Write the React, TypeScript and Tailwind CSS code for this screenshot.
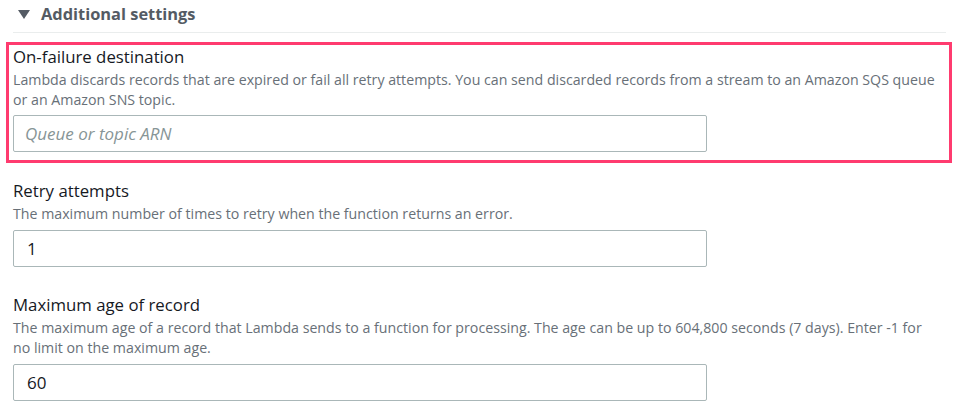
import React from 'react';

const font = { fontFamily: '"Open Sans", "Liberation Sans", sans-serif' };

function Field({
  label,
  description,
  value,
  placeholder,
  inputGap,
}: {
  label: string;
  description: string;
  value?: string;
  placeholder?: string;
  inputGap: string;
}) {
  return (
    <div className="flex flex-col">
      <div className="text-[16.8px] leading-[22px] text-[#16191f]">{label}</div>
      <p className="mt-[2px] max-w-[928px] text-[14.2px] leading-[20px] text-[#687078]">{description}</p>
      <div
        className={`${inputGap} w-[694px] h-[37px] border border-[#aab7b8] rounded-[2px] flex items-center px-[11px] text-[17px]`}
      >
        {value ? (
          <span className="text-[#16191f] ml-[2px]">{value}</span>
        ) : (
          <span className="italic text-[#879596]">{placeholder}</span>
        )}
      </div>
    </div>
  );
}

export default function App() {
  return (
    <div className="w-[960px] h-[412px] bg-white overflow-hidden" style={font}>
      {/* Header */}
      <div className="ml-[13px] mr-[14px] h-[33px] border-b border-[#eaeded] flex items-start pt-[3px]">
        <div className="flex items-center gap-[11px] ml-[5px]">
          <svg width="12" height="10" viewBox="0 0 12 10" className="mt-[1px]">
            <polygon points="0,0 12,0 6,9" fill="#545b64" />
          </svg>
          <span className="text-[16.4px] leading-[22px] font-bold text-[#545b64]">Additional settings</span>
        </div>
      </div>

      {/* Highlighted section */}
      <div className="ml-[6px] mr-[8px] mt-[9px] border-[3px] border-[#ff3b6f] pl-[4px] pt-[1px] pb-[8px]">
        <Field
          label="On-failure destination"
          description="Lambda discards records that are expired or fail all retry attempts. You can send discarded records from a stream to an Amazon SQS queue or an Amazon SNS topic."
          placeholder="Queue or topic ARN"
          inputGap="mt-[5px]"
        />
      </div>

      <div className="ml-[13px] mr-[8px] mt-[17px]">
        <Field
          label="Retry attempts"
          description="The maximum number of times to retry when the function returns an error."
          value="1"
          inputGap="mt-[6px]"
        />
      </div>

      <div className="ml-[13px] mr-[8px] mt-[27px]">
        <Field
          label="Maximum age of record"
          description="The maximum age of a record that Lambda sends to a function for processing. The age can be up to 604,800 seconds (7 days). Enter -1 for no limit on the maximum age."
          value="60"
          inputGap="mt-[6px]"
        />
      </div>
    </div>
  );
}
